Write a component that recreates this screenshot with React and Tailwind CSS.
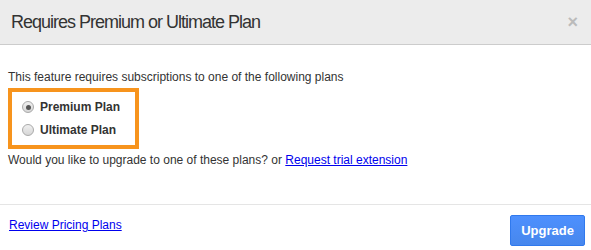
import React from 'react';

function Radio({ checked }) {
  return (
    <span className="w-[12px] h-[12px] rounded-full border border-[#a9a9a9] bg-gradient-to-b from-[#f0f0f0] to-[#d6d6d6] flex items-center justify-center shrink-0">
      {checked && <span className="w-[5px] h-[5px] rounded-full bg-[#555]" />}
    </span>
  );
}

export default function App() {
  return (
    <div className="w-[591px] h-[250px] bg-white text-[#333] overflow-hidden" style={{ fontFamily: '"Liberation Sans", Arial, sans-serif' }}>
      <div className="h-[45px] bg-[#ececec] border-b border-[#cccccc] flex items-center justify-between pl-[11px] pr-[13px]">
        <h3 className="text-[18px] leading-none tracking-[-1px] text-[#333]">Requires Premium or Ultimate Plan</h3>
        <span className="text-[#bbbbbb] text-[18px] font-bold leading-none">×</span>
      </div>
      <div className="px-[8px] pt-[25px] h-[159px] text-[12px]">
        <p className="leading-[14px]">This feature requires subscriptions to one of the following plans</p>
        <div className="mt-[4px] w-[131px] border-[4px] border-[#f7941d] pl-[10px] pt-[8px] pb-[8px] flex flex-col gap-[9px]">
          <label className="flex items-center gap-[6px] font-bold leading-[14px]">
            <Radio checked />
            Premium Plan
          </label>
          <label className="flex items-center gap-[6px] font-bold leading-[14px]">
            <Radio />
            Ultimate Plan
          </label>
        </div>
        <p className="mt-[4px] leading-[14px]">
          Would you like to upgrade to one of these plans? or{' '}
          <a href="#" className="text-[#0000ee] underline">Request trial extension</a>
        </p>
      </div>
      <div className="border-t border-[#e5e5e5] flex justify-between items-start pl-[9px] pr-[6px]">
        <a href="#" className="mt-[11px] text-[12px] text-[#0000ee] underline">Review Pricing Plans</a>
        <button className="mt-[10px] w-[75px] h-[31px] bg-gradient-to-b from-[#4d90fe] to-[#4787ed] border border-[#3079ed] text-white text-[13px] font-bold rounded-[2px]">
          Upgrade
        </button>
      </div>
    </div>
  );
}
